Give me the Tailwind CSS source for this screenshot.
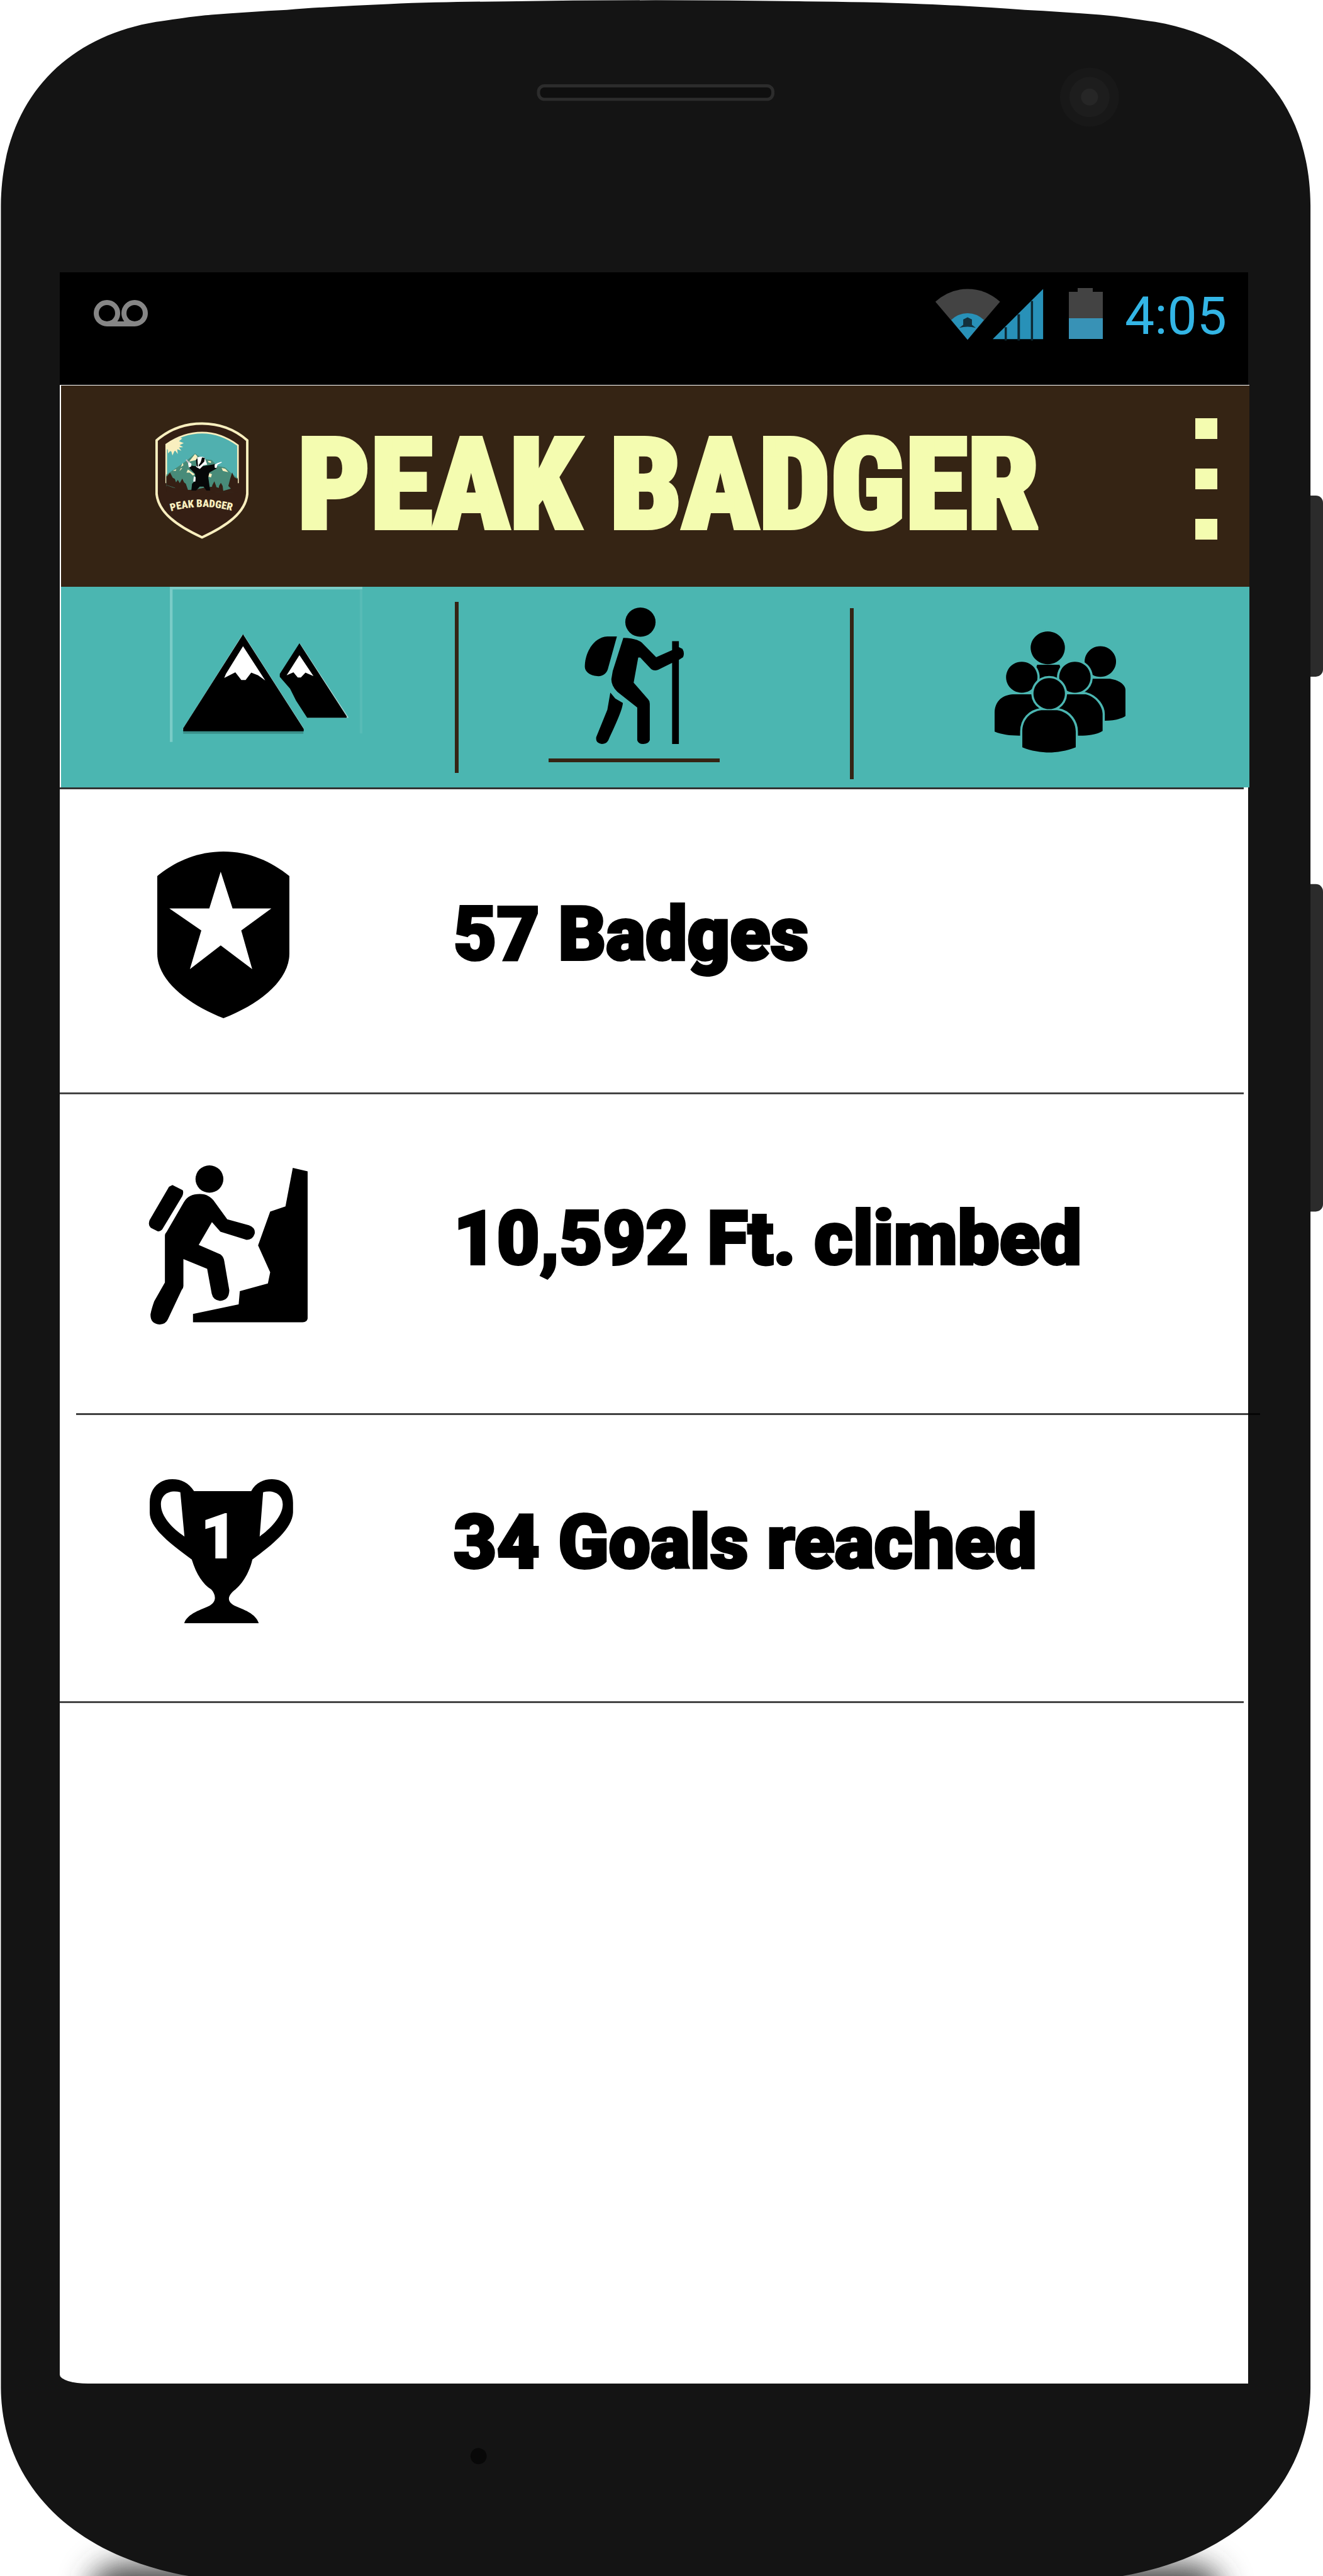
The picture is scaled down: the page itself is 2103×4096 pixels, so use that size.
<!DOCTYPE html>
<html lang="en">
<head>
<meta charset="utf-8">
<meta name="viewport" content="width=device-width, initial-scale=1">
<title>Peak Badger</title>
<script src="https://cdn.jsdelivr.net/npm/@tailwindcss/browser@4"></script>
</head>
<body class="bg-white">
<div class="relative flex min-h-screen w-full flex-col overflow-hidden pt-[433px] pr-[119px] pb-[306px] pl-[95px]">

  <!-- Handset: shadow, side buttons, casing, speaker, camera, microphone -->
  <svg class="absolute inset-0 h-full w-full" viewBox="0 0 2958 5760" preserveAspectRatio="none" aria-hidden="true">
    <defs><filter id="soft" x="-10%" y="-200%" width="120%" height="500%"><feGaussianBlur stdDeviation="34"/></filter></defs>
    <rect x="200" y="5735" width="2532" height="140" rx="70" fill="#444" filter="url(#soft)"/>
    <rect x="2900" y="1108" width="58" height="405" rx="16" fill="#2b2b2b"/>
    <rect x="2900" y="1977" width="58" height="732" rx="16" fill="#2b2b2b"/>
    <path fill="#141414" d="M2 459C4 230 140 84 349 49C410 40 436 36 472 33C530 28 585 25 641 22C720 16 790 12 868 9C960 5 1040 4 1132 3Q1466 -2 1800 3C1892 4 1972 5 2064 9C2142 12 2212 16 2291 22C2347 25 2402 28 2460 33C2496 36 2522 40 2583 49C2792 84 2928 230 2930 459V5340C2928 5560 2762 5720 2498 5762H434C170 5720 4 5560 2 5340Z"/>
    <rect x="1204" y="192" width="524" height="30" rx="13" fill="#0f0f0f" stroke="#2c2c2c" stroke-width="7"/>
    <circle cx="2436" cy="217" r="66" fill="#181818"/>
    <circle cx="2436" cy="217" r="45" fill="#1d1d1d"/>
    <circle cx="2436" cy="217" r="19" fill="#262626"/>
    <circle cx="1070" cy="5492" r="18" fill="#080808"/>
  </svg>

  <main class="relative flex flex-1 flex-col rounded-bl-[45px_14px] bg-white">

    <!-- System status bar -->
    <div class="flex h-[179px] items-start justify-between bg-black pt-[21px] pr-[34px] pl-[53px]">
      <svg class="mt-[21px] h-[47px] w-[89px]" viewBox="0 0 89 47" fill="none" stroke="#868686" stroke-width="8" role="img" aria-label="Voicemail">
        <circle cx="22" cy="23" r="17"/><circle cx="66" cy="23" r="17"/><path d="M22 40H66"/>
      </svg>
      <div class="flex items-start">
        <svg class="mt-[5px] h-[84px] w-[173px]" viewBox="146 138 399 354" preserveAspectRatio="none" role="img" aria-label="Wi-Fi and signal">
          <path fill="#434343" d="M266 480L148 225Q200 140 266 140T385 225Z"/>
          <path fill="#2891b8" d="M266 480L206 348Q232 302 266 302T326 348Z"/>
          <path fill="#13303b" d="M236 400L250 380V345L266 330L282 345V380L296 400Q266 385 236 400Z"/>
          <path fill="#2891b8" d="M543 140V476H358Z"/>
          <path fill="#0d2933" d="M402 396h8v90h-8zM449 310h9v176h-9zM498 220h8v266h-8z"/>
        </svg>
        <svg class="ml-[37px] h-[89px] w-[57px]" viewBox="0 0 57 89" role="img" aria-label="Battery">
          <path fill="#434343" d="M17 4H41V10H57V52H3V10H17Z"/><path fill="#3892b6" d="M3 52H57V85H3Z"/>
        </svg>
        <time class="ml-[35px] font-['Roboto',sans-serif] text-[84px] leading-[98px] text-[#33b5e5]">4:05</time>
      </div>
    </div>

    <!-- App bar -->
    <header class="-mr-[2px] flex items-start border-t border-l-2 border-white bg-[#352414] pt-[58px] pr-[51px] pb-[62px] pl-[150px]">
      <svg class="h-[186px] w-[148px] shrink-0" viewBox="141 130 627 785" role="img" aria-label="Peak Badger logo">
        <defs>
          <path id="arc" d="M246 730Q455 672 670 730"/>
          <clipPath id="scene"><path d="M214 280Q330 200 455 200T696 285V600H214Z"/></clipPath>
        </defs>
        <path fill="#351f14" stroke="#f9efbf" stroke-width="17" stroke-linejoin="round" d="M149 252Q280 139 455 139T760 252V610C750 740 620 830 455 906C290 830 160 740 149 610Z"/>
        <path fill="#50b0af" stroke="#f9efbf" stroke-width="11" d="M214 540V280Q330 200 455 200T697 285V540"/>
        <g clip-path="url(#scene)">
          <circle cx="255" cy="282" r="45" fill="#f9efbf"/>
          <path fill="#f9efbf" d="M285 225L322 240L300 258L332 270L304 284L328 298L300 300L316 322L288 312L292 345L272 318L256 354L246 318L226 340L224 300Z"/>
          <path fill="#488b79" d="M205 490L300 425L350 390L408 340L460 375L520 385L560 425L610 435L660 480L700 510V600L570 608L450 580L330 600L205 560Z"/>
          <path fill="#f9efbf" d="M408 345L424 360L415 385L368 395ZM325 403L330 420L312 432ZM258 456L282 446L278 458ZM303 460L312 440L322 440ZM495 390L515 392L515 405L498 400ZM587 438L612 444L632 466L595 458ZM350 470L360 448L405 480L395 490L372 470ZM495 470L522 480L515 502L496 495Z"/>
          <path fill="#351f14" d="M205 490L218 495L240 470L258 505L272 512L280 535L292 518L305 540L322 510L334 535L346 545L362 590L330 598L300 592L270 570L205 550ZM518 590L524 555L538 528L550 560L556 588L566 590L570 558L582 538L594 560L598 592L650 578L632 560L645 510L658 468L672 500L700 515V600L518 608Z"/>
          <path fill="#351f14" d="M205 550Q330 605 450 575T600 600L700 555V620H205Z"/>
        </g>
        <path fill="#060708" d="M365 432L378 422L440 430L540 412L556 440L505 468L497 500L510 590H485L465 564H440L415 590H383L388 545L412 520L408 478Z"/>
        <path fill="#fff" d="M422 368Q450 358 472 368L490 415L465 420L440 445L415 430ZM358 390L384 410L382 428L366 436ZM540 415L560 405L586 396L588 402L560 416L552 440L540 436ZM400 494L412 500L410 530L396 530Z"/>
        <path fill="#060708" d="M424 372L428 430L418 425L414 385ZM455 368L474 370L470 395L450 415L436 428L432 420L446 400Z"/>
        <path stroke="#c9bcc4" stroke-width="8" fill="none" d="M348 382L366 404"/>
        <text class="font-['Roboto_Condensed',sans-serif] font-black" font-size="71" fill="#f9efbf"><textPath href="#arc">PEAK BADGER</textPath></text>
      </svg>
      <h1 class="ml-[78px] font-['Roboto_Condensed','Roboto',sans-serif] text-[202px] leading-[200px] font-black whitespace-nowrap text-[#f4fcb0] [-webkit-text-stroke:6px_#f4fcb0]">PEAK BADGER</h1>
      <button type="button" aria-label="Menu" class="-mt-[6px] ml-auto flex flex-col gap-[47px]">
        <span class="h-[33px] w-[35px] bg-[#f4fcb0]"></span>
        <span class="h-[33px] w-[35px] bg-[#f4fcb0]"></span>
        <span class="h-[33px] w-[35px] bg-[#f4fcb0]"></span>
      </button>
    </header>

    <!-- Section tabs -->
    <nav class="-mr-[2px] grid h-[319px] grid-cols-[626fr_6px_622fr_6px_629fr] items-start border-l-2 border-white bg-[#4bb6b1]">
      <a href="#mountains" aria-label="Mountains" class="block pl-[173px]">
        <svg class="h-[251px] w-[306px]" viewBox="102 36 1126 1059" preserveAspectRatio="none" aria-hidden="true">
          <path fill="#7accc7" d="M102 36H1228V54H118V1077H102Z"/>
          <path fill="#57bbb6" d="M1213 54H1228V1020H1213Z"/>
          <path fill="none" stroke="#a5cfcc" stroke-width="10" d="M530 360L883 992M860 420L1140 910H915M530 360L180 995"/>
          <path fill="#3a8f8a" d="M180 1000H883V1022H180Z"/>
          <path d="M530 355L885 990V1005H180V985Z"/>
          <path d="M860 415L1136 905V915H905L840 800L805 720L745 640V620Z"/>
          <path fill="#fff" d="M530 435L660 665L618 630L578 612L545 662H520L485 610L420 648L430 620Z"/>
          <path fill="#fff" d="M860 495L942 635L895 612L868 645H850L825 610L785 630Z"/>
        </svg>
      </a>
      <span class="mt-[24px] h-[272px] bg-[#352414]"></span>
      <a href="#hikes" aria-label="Hikes" aria-current="page" class="ml-[143px] flex w-[272px] justify-center border-b-[6px] border-[#352414] pt-[33px] pb-[23px]">
        <svg class="h-[217px] w-[159px]" viewBox="455 174 502 916" preserveAspectRatio="none" aria-hidden="true">
          <ellipse cx="736" cy="272" rx="76" ry="98"/>
          <path d="M618 368H570C500 372 457 480 457 570C457 610 490 635 525 635C550 635 565 615 572 590Z"/>
          <path d="M650 378C690 378 725 390 742 408L815 508L895 460V400H929V440L947 452Q959 480 950 508L929 525V1090H895V545L825 592Q805 602 790 588L735 510H725L702 678L775 790Q783 800 783 820V1065Q775 1090 750 1090Q725 1090 720 1065V845L620 740Q590 700 590 655L597 600Z"/>
          <path d="M585 745L610 785L648 815C645 860 620 935 575 1065Q565 1090 543 1090Q510 1085 514 1045L570 860Z"/>
        </svg>
      </a>
      <span class="mt-[34px] h-[272px] bg-[#352414]"></span>
      <a href="#friends" aria-label="Friends" class="flex pt-[71px] pl-[224px]">
        <svg class="h-[193px] w-[208px] overflow-visible" viewBox="586 338 458 814" preserveAspectRatio="none" aria-hidden="true">
          <g stroke="#4bb6b1" stroke-width="7" style="paint-order:stroke">
            <path vector-effect="non-scaling-stroke" d="M772 338a60 110 0 1 0 .1 0zM735 562H813L850 760H700Z"/>
            <path vector-effect="non-scaling-stroke" d="M956 437a55 103 0 1 0 .1 0zM900 655H990C1025 665 1044 700 1044 730V905C1030 925 1000 937 973 937H900Z"/>
            <path vector-effect="non-scaling-stroke" d="M681 541a55 104 0 1 0 .1 0zM586 1010V880C588 800 615 765 650 760H715L780 900V1037H672C640 1037 610 1030 586 1010Z"/>
            <path vector-effect="non-scaling-stroke" d="M867 541a55 104 0 1 0 .1 0zM820 760H905C945 780 964 850 964 890V1005C945 1030 910 1037 885 1037H780V860Z"/>
            <path vector-effect="non-scaling-stroke" d="M777 651a55 104 0 1 0 .1 0zM683 1115V1010C683 930 710 876 750 866H805C850 880 870 950 870 1010V1115C840 1140 800 1150 777 1150S710 1140 683 1115Z"/>
          </g>
        </svg>
      </a>
    </nav>
    <hr class="mr-[7px] h-[3px] border-0 bg-[#333]">

    <!-- Hiker statistics -->
    <section class="flex items-start pt-[99px] pb-[118px] pl-[141px]">
      <div class="w-[485px] shrink-0 pl-[14px]">
        <svg class="h-[265px] w-[210px]" viewBox="492 165 579 1119" preserveAspectRatio="none" aria-hidden="true">
          <path d="M492 330C570 230 670 165 782 165S990 230 1071 330V850C1071 1030 940 1190 782 1284C625 1190 492 1030 492 850Z"/>
          <path fill="#fff" d="M770 300L822 547H992L860 695L908 955L770 795L635 955L685 695L545 547H720Z"/>
        </svg>
      </div>
      <p class="mt-[72px] font-['Roboto',sans-serif] text-[118px] leading-[120px] font-black whitespace-nowrap text-black [-webkit-text-stroke:4px_#000]">57 Badges</p>
    </section>
    <hr class="mr-[7px] h-[3px] border-0 bg-[#444]">

    <section class="flex items-start pt-[113px] pb-[141px] pl-[141px]">
      <div class="w-[485px] shrink-0">
        <svg class="h-[253px] w-[253px]" viewBox="455 280 697 930" preserveAspectRatio="none" aria-hidden="true">
          <ellipse cx="722" cy="360" rx="61" ry="80"/>
          <path d="M560 395L605 425Q610 440 603 460L515 655Q505 668 495 665L465 645Q452 630 460 600L545 405Z"/>
          <path d="M680 447C710 447 728 465 740 485L800 595L895 630Q925 645 920 680Q912 715 885 716L770 668L733 612L675 745L770 800Q785 815 787 840L809 1010Q808 1070 768 1072Q738 1068 732 1030L712 885L608 828V985Q608 1000 600 1010L540 1180Q530 1210 503 1210Q462 1205 464 1150Q468 1120 480 1075L527 965V690Q527 680 535 668L610 495Q630 447 680 447Z"/>
          <path d="M1087 295L1152 315V1175Q1150 1195 1130 1197H650V1148L850 1092L855 1015L978 970L988 905L935 748L988 550L1055 520Z"/>
        </svg>
      </div>
      <p class="mt-[57px] font-['Roboto',sans-serif] text-[118px] leading-[120px] font-black whitespace-nowrap text-black [-webkit-text-stroke:4px_#000]">10,592 Ft. climbed</p>
    </section>
    <hr class="-mr-[19px] ml-[26px] h-[3px] border-0 bg-black/75">

    <section class="flex items-start pt-[102px] pb-[124px] pl-[143px]">
      <div class="w-[483px] shrink-0">
        <svg class="h-[229px] w-[228px]" viewBox="0 0 228 229" aria-hidden="true">
          <path fill-rule="evenodd" transform="scale(.3633 .3176) translate(-461 -353)" d="M655 413H905C925 370 960 353 995 353C1055 353 1088 400 1088 470V520C1085 600 1000 680 910 755C895 830 860 885 830 910C800 940 800 965 830 985C870 1005 925 1025 938 1074H612C625 1025 690 1005 725 985C755 965 750 930 730 905C695 880 665 830 645 755C555 680 461 600 461 520V470C461 395 505 353 560 353C600 353 630 370 655 413ZM595 420L613 640C560 600 510 540 510 480C510 430 545 405 595 418ZM957 420L942 640C985 605 1043 540 1043 480C1043 430 1005 405 957 418Z"/>
          <text x="110" y="125" text-anchor="middle" font-size="98" fill="#fff" stroke="#fff" stroke-width="2" class="font-['Roboto',sans-serif] font-black">1</text>
        </svg>
      </div>
      <p class="mt-[41px] font-['Roboto',sans-serif] text-[118px] leading-[120px] font-black whitespace-nowrap text-black [-webkit-text-stroke:4px_#000]">34 Goals reached</p>
    </section>
    <hr class="mr-[7px] h-[3px] border-0 bg-[#444]">
  </main>
</div>
</body>
</html>
